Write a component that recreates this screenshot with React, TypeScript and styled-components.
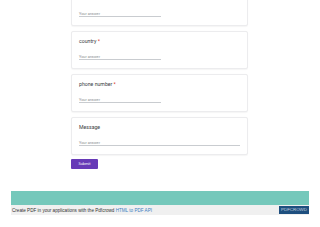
import React from "react";
import styled, { createGlobalStyle } from "styled-components";

const Global = createGlobalStyle`
  html, body { margin: 0; padding: 0; background: #ffffff; }
  body { font-family: Roboto, "Liberation Sans", Arial, sans-serif; overflow: hidden; }
`;

const Page = styled.div`
  width: 320px;
  height: 227px;
  overflow: hidden;
  display: flex;
  flex-direction: column;
`;

const Form = styled.div`
  margin: -12px 0 0 71px;
  width: 177px;
  display: flex;
  flex-direction: column;
  gap: 5px;
`;

const Card = styled.div`
  box-sizing: border-box;
  height: 38px;
  background: #ffffff;
  border: 1px solid #ececee;
  border-radius: 2px;
  box-shadow: 0 0.5px 1px rgba(0, 0, 0, 0.04);
  padding: 6px 7px 8px;
  display: flex;
  flex-direction: column;
  justify-content: flex-end;
`;

const Title = styled.div`
  font-size: 5.2px;
  line-height: 7px;
  color: #3c4043;
  margin-bottom: 9px;
`;

const Star = styled.span`
  color: #d93025;
`;

const Answer = styled.div<{ $full?: boolean }>`
  box-sizing: border-box;
  width: ${(p) => (p.$full ? "100%" : "82px")};
  height: 6.5px;
  font-size: 3.8px;
  line-height: 5.5px;
  color: #8a8e93;
  border-bottom: 0.6px solid #c9ccd0;
`;

const Submit = styled.button`
  margin-top: -1px;
  align-self: flex-start;
  width: 27px;
  height: 10px;
  padding: 0;
  border: none;
  border-radius: 1px;
  background: #673ab7;
  color: #ffffff;
  font-family: Roboto, "Liberation Sans", Arial, sans-serif;
  font-size: 3.8px;
  line-height: 10px;
  text-align: center;
`;

const Footer = styled.div`
  margin: 22px 11px 0;
  display: flex;
  flex-direction: column;
`;

const Band = styled.div`
  height: 14px;
  background: #75c8bb;
`;

const Bar = styled.div`
  height: 10px;
  background: #f0f0f0;
  display: flex;
  align-items: center;
  justify-content: space-between;
  padding-left: 1px;
`;

const BarText = styled.span`
  font-family: "Liberation Sans", Arial, sans-serif;
  font-size: 4.6px;
  color: #333333;
  white-space: nowrap;
`;

const Link = styled.span`
  color: #3f7fc2;
`;

const Badge = styled.span`
  height: 8px;
  width: 30px;
  box-sizing: border-box;
  text-align: center;
  background: #1e4f7f;
  color: #c8d3df;
  font-family: "Liberation Sans", Arial, sans-serif;
  font-size: 4.4px;
  line-height: 8px;
`;

type Q = { title?: string; required?: boolean; full?: boolean };

const questions: Q[] = [
  {},
  { title: "country", required: true },
  { title: "phone number", required: true },
  { title: "Message", full: true },
];

export default function App() {
  return (
    <Page>
      <Global />
      <Form>
        {questions.map((q, i) => (
          <Card key={i}>
            {q.title && (
              <Title>
                {q.title}
                {q.required && <Star> *</Star>}
              </Title>
            )}
            <Answer $full={q.full}>Your answer</Answer>
          </Card>
        ))}
        <Submit>Submit</Submit>
      </Form>
      <Footer>
        <Band />
        <Bar>
          <BarText>
            Create PDF in your applications with the Pdfcrowd <Link>HTML to PDF API</Link>
          </BarText>
          <Badge>PDFCROWD</Badge>
        </Bar>
      </Footer>
    </Page>
  );
}
